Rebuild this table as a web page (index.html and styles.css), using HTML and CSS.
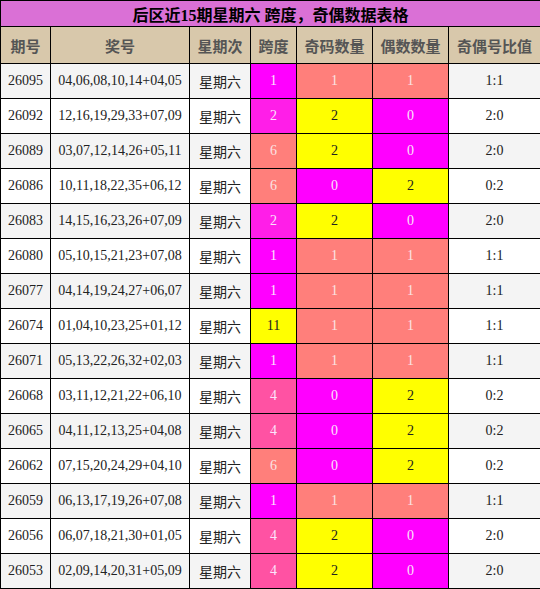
FILE: index.html
```html
<!DOCTYPE html>
<html>
<head>
<meta charset="utf-8">
<link rel="stylesheet" href="styles.css">
</head>
<body>
<table class="tbl">
<colgroup>
<col class="c1"><col class="c2"><col class="c3"><col class="c4"><col class="c5"><col class="c6"><col class="c7">
</colgroup>
<thead>
<tr class="title"><th colspan="7">后区近15期星期六 跨度，奇偶数据表格</th></tr>
<tr class="head"><th>期号</th><th>奖号</th><th>星期次</th><th>跨度</th><th>奇码数量</th><th>偶数数量</th><th>奇偶号比值</th></tr>
</thead>
<tbody>
<tr class="odd"><td>26095</td><td>04,06,08,10,14+04,05</td><td class="wk">星期六</td><td class="s1">1</td><td class="sal">1</td><td class="sal">1</td><td>1:1</td></tr>
<tr><td>26092</td><td>12,16,19,29,33+07,09</td><td class="wk">星期六</td><td class="s2">2</td><td class="yel">2</td><td class="mag">0</td><td>2:0</td></tr>
<tr class="odd"><td>26089</td><td>03,07,12,14,26+05,11</td><td class="wk">星期六</td><td class="s6">6</td><td class="yel">2</td><td class="mag">0</td><td>2:0</td></tr>
<tr><td>26086</td><td>10,11,18,22,35+06,12</td><td class="wk">星期六</td><td class="s6">6</td><td class="mag">0</td><td class="yel">2</td><td>0:2</td></tr>
<tr class="odd"><td>26083</td><td>14,15,16,23,26+07,09</td><td class="wk">星期六</td><td class="s2">2</td><td class="yel">2</td><td class="mag">0</td><td>2:0</td></tr>
<tr><td>26080</td><td>05,10,15,21,23+07,08</td><td class="wk">星期六</td><td class="s1">1</td><td class="sal">1</td><td class="sal">1</td><td>1:1</td></tr>
<tr class="odd"><td>26077</td><td>04,14,19,24,27+06,07</td><td class="wk">星期六</td><td class="s1">1</td><td class="sal">1</td><td class="sal">1</td><td>1:1</td></tr>
<tr><td>26074</td><td>01,04,10,23,25+01,12</td><td class="wk">星期六</td><td class="s11">11</td><td class="sal">1</td><td class="sal">1</td><td>1:1</td></tr>
<tr class="odd"><td>26071</td><td>05,13,22,26,32+02,03</td><td class="wk">星期六</td><td class="s1">1</td><td class="sal">1</td><td class="sal">1</td><td>1:1</td></tr>
<tr><td>26068</td><td>03,11,12,21,22+06,10</td><td class="wk">星期六</td><td class="s4">4</td><td class="mag">0</td><td class="yel">2</td><td>0:2</td></tr>
<tr class="odd"><td>26065</td><td>04,11,12,13,25+04,08</td><td class="wk">星期六</td><td class="s4">4</td><td class="mag">0</td><td class="yel">2</td><td>0:2</td></tr>
<tr><td>26062</td><td>07,15,20,24,29+04,10</td><td class="wk">星期六</td><td class="s6">6</td><td class="mag">0</td><td class="yel">2</td><td>0:2</td></tr>
<tr class="odd"><td>26059</td><td>06,13,17,19,26+07,08</td><td class="wk">星期六</td><td class="s1">1</td><td class="sal">1</td><td class="sal">1</td><td>1:1</td></tr>
<tr><td>26056</td><td>06,07,18,21,30+01,05</td><td class="wk">星期六</td><td class="s4">4</td><td class="yel">2</td><td class="mag">0</td><td>2:0</td></tr>
<tr class="odd"><td>26053</td><td>02,09,14,20,31+05,09</td><td class="wk">星期六</td><td class="s4">4</td><td class="yel">2</td><td class="mag">0</td><td>2:0</td></tr>
</tbody>
</table>
</body>
</html>
```
FILE: styles.css
```css
html, body {
  margin: 0;
  padding: 0;
  background: #fff;
}
.tbl {
  width: 540px;
  border-collapse: collapse;
  table-layout: fixed;
  font-family: "Liberation Serif", "Noto Sans CJK SC", serif;
  font-size: 14px;
  color: #222;
}
.c1 { width: 50px; }
.c2 { width: 139px; }
.c3 { width: 61px; }
.c4 { width: 46px; }
.c5 { width: 76px; }
.c6 { width: 76px; }
.c7 { width: 92px; }
.tbl th, .tbl td {
  border: 1px solid #000;
  padding: 0;
  text-align: center;
  overflow: hidden;
  white-space: nowrap;
}
.title th {
  background: #da70d6;
  height: 25px;
  font-family: "Liberation Serif", "Noto Sans CJK SC", serif;
  font-size: 16px;
  font-weight: bold;
  color: #000;
}
.head th {
  background: #d8c8ab;
  height: 36px;
  font-family: "Noto Sans CJK SC", sans-serif;
  font-size: 15px;
  font-weight: bold;
  color: #555;
}
.tbl td {
  height: 34px;
  background: #fff;
}
.odd td {
  background: #f4f4f4;
}
.wk {
  font-family: "Noto Sans CJK SC", sans-serif;
  font-size: 14px;
}
.tbl td.s1, .tbl td.mag { background: #ff00ff; color: #fbe3fb; }
.tbl td.s2 { background: #ff1ee8; color: #fbe3fb; }
.tbl td.s4 { background: #ff52a3; color: #fbe3fb; }
.tbl td.s6, .tbl td.sal { background: #ff7f7b; color: #fbe3e3; }
.tbl td.s11, .tbl td.yel { background: #ffff00; color: #222; }
```
